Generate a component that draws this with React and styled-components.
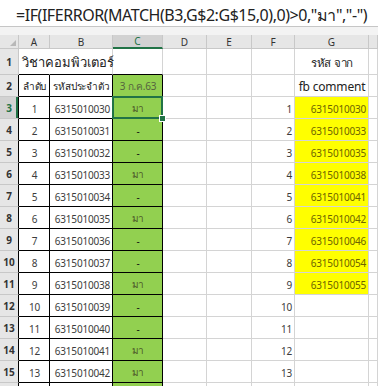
import React from 'react';
import styled, { createGlobalStyle, css } from 'styled-components';

const GlobalStyle = createGlobalStyle`
  body {
    margin: 0;
    font-family: "Noto Sans", "Liberation Sans", "DejaVu Sans", sans-serif;
  }
`;

const GREEN = '#92d050';
const YELLOW = '#ffff00';
const GRID = '#d4d4d4';
const SELECT = '#217346';

const Sheet = styled.div`
  width: 378px;
  height: 386px;
  overflow: hidden;
  background: #f3f3f3;
`;

const FormulaBar = styled.div`
  box-sizing: border-box;
  height: 27px;
  background: #fff;
  border-bottom: 1px solid #c6c6c6;
  padding: 3px 0 0 16px;
  font-size: 16px;
  letter-spacing: -0.45px;
  line-height: 24px;
  color: #222;
  white-space: nowrap;
  overflow: hidden;
`;

const Gap = styled.div`
  height: 8px;
`;

const Grid = styled.div`
  display: grid;
  grid-template-columns: 19px 31px 63px 50px 44px 45px 43px 74px 1fr;
  grid-template-rows: 14px 26px repeat(15, 22px);
  background: #fff;
`;

const Corner = styled.div`
  position: relative;
  box-sizing: border-box;
  background: #e6e6e6;
  border-right: 1px solid #c8c8c8;
  border-bottom: 1px solid #c8c8c8;

  &::after {
    content: "";
    position: absolute;
    right: 2px;
    bottom: 2px;
    border-style: solid;
    border-width: 0 0 6px 6px;
    border-color: transparent transparent #b8b8b8 transparent;
  }
`;

const ColHead = styled.div`
  box-sizing: border-box;
  display: flex;
  align-items: center;
  justify-content: center;
  font-size: 10px;
  color: #333;
  background: #e6e6e6;
  border-right: 1px solid #c8c8c8;
  border-bottom: 1px solid #c8c8c8;
  ${p => p.$active && css`
    background: #d2d2d2;
    color: ${SELECT};
    border-bottom: 2px solid ${SELECT};
  `}
`;

const RowHead = styled.div`
  box-sizing: border-box;
  display: flex;
  align-items: center;
  justify-content: center;
  padding-top: 1px;
  font-size: 10px;
  font-weight: bold;
  color: #333;
  background: #e6e6e6;
  border-bottom: 1px solid #c8c8c8;
  border-right: 1px solid ${p => (p.$boxed ? '#000' : '#c8c8c8')};
  ${p => p.$active && css`
    background: #d2d2d2;
    color: ${SELECT};
    box-shadow: inset -2px 0 0 ${SELECT};
  `}
`;

const Cell = styled.div`
  position: relative;
  box-sizing: border-box;
  display: flex;
  align-items: center;
  justify-content: ${p => p.$align || 'flex-start'};
  padding: 2px 2px 0 3px;
  font-size: ${p => p.$size || 10}px;
  letter-spacing: -0.2px;
  color: ${p => p.$color || '#3c3c3c'};
  background: ${p => p.$fill || '#fff'};
  white-space: nowrap;
  border-right: 1px solid ${p => (p.$boxed ? '#000' : GRID)};
  border-bottom: 1px solid ${p => (p.$boxed || p.$topOfBox ? '#000' : GRID)};
  ${p => p.$overflow && css`
    border-right-color: transparent;
    overflow: visible;
    z-index: 1;
  `}
  ${p => p.$big && css`
    font-size: 13px;
    letter-spacing: 0;
    color: #222;
  `}
  ${p => p.$selected && css`
    &::after {
      content: "";
      position: absolute;
      inset: -1px -1px -1px -1px;
      border: 2px solid ${SELECT};
    }
    &::before {
      content: "";
      position: absolute;
      right: -4px;
      bottom: -4px;
      width: 5px;
      height: 5px;
      background: ${SELECT};
      border: 1px solid #fff;
      z-index: 2;
    }
  `}
`;

const fbIds = [
  '6315010030', '6315010033', '6315010035', '6315010038', '6315010041',
  '6315010042', '6315010046', '6315010054', '6315010055',
];

// rows 3..15 hold data, row 16 only peeks in at the bottom
const students = Array.from({ length: 13 }, (_, i) => String(6315010030 + i));

const columns = ['A', 'B', 'C', 'D', 'E', 'F', 'G', ''];

export default function App() {
  return (
    <Sheet>
      <GlobalStyle />
      <FormulaBar>=IF(IFERROR(MATCH(B3,G$2:G$15,0),0)&gt;0,"มา","-")</FormulaBar>
      <Gap />
      <Grid>
        <Corner />
        {columns.map((c, i) => (
          <ColHead key={i} $active={c === 'C'}>{c}</ColHead>
        ))}

        <RowHead>1</RowHead>
        <Cell $big $overflow $topOfBox>วิชาคอมพิวเตอร์</Cell>
        <Cell $topOfBox />
        <Cell $topOfBox />
        <Cell />
        <Cell />
        <Cell />
        <Cell $align="center" $color="#222" $size={11.5}>รหัส จาก</Cell>
        <Cell />

        <RowHead $boxed>2</RowHead>
        <Cell $boxed $align="center" $color="#222">ลำดับ</Cell>
        <Cell $boxed $align="center" $color="#222">รหัสประจำตัว</Cell>
        <Cell $boxed $align="center" $fill={GREEN} $color="#55633f">3 ก.ค.63</Cell>
        <Cell />
        <Cell />
        <Cell />
        <Cell $align="center" $color="#222" $size={12}>fb comment</Cell>
        <Cell />

        {students.map((id, i) => {
          const row = i + 3;
          const came = fbIds.includes(id);
          const g = fbIds[i];
          return (
            <React.Fragment key={id}>
              <RowHead $boxed $active={row === 3}>{row}</RowHead>
              <Cell $boxed $align="center">{i + 1}</Cell>
              <Cell $boxed $align="flex-end">{id}</Cell>
              <Cell
                $boxed
                $align="center"
                $fill={GREEN}
                $color={came ? '#4f5a2a' : '#111'}
                $selected={row === 3}
              >
                {came ? 'มา' : '-'}
              </Cell>
              <Cell />
              <Cell />
              <Cell $align="flex-end">{i + 1}</Cell>
              <Cell $align="flex-end" $fill={g ? YELLOW : '#fff'} $color="#6e6400">
                {g}
              </Cell>
              <Cell />
            </React.Fragment>
          );
        })}

        <RowHead $boxed />
        <Cell $boxed />
        <Cell $boxed />
        <Cell $boxed $fill={GREEN} />
        <Cell />
        <Cell />
        <Cell />
        <Cell />
        <Cell />
      </Grid>
    </Sheet>
  );
}
